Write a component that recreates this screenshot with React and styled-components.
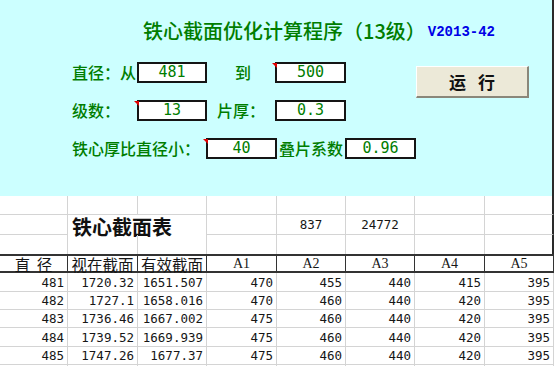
import styled, { createGlobalStyle, css } from "styled-components";

const GlobalStyle = createGlobalStyle`
  html, body { margin: 0; padding: 0; background: #ffffff; }
  body {
    width: 554px;
    height: 366px;
    overflow: hidden;
    font-family: "Noto Sans CJK SC", sans-serif;
  }
`;

const GREEN = "#007d00";

const rows = [
  ["481", "1720.32", "1651.507", "470", "455", "440", "415", "395"],
  ["482", "1727.1", "1658.016", "470", "460", "440", "420", "395"],
  ["483", "1736.46", "1667.002", "475", "460", "440", "420", "395"],
  ["484", "1739.52", "1669.939", "475", "460", "440", "420", "395"],
  ["485", "1747.26", "1677.37", "475", "460", "440", "420", "395"],
];

export default function App() {
  return (
    <Page>
      <GlobalStyle />
      <Panel>
        <TitleRow>
          <Title>铁心截面优化计算程序（13级）</Title>
          <Version>V2013-42</Version>
        </TitleRow>
        <PanelBody>
          <Form>
            <FormRow>
              <Label $w={65}>直径：从</Label>
              <ValueBox $w={70}>481</ValueBox>
              <Label $w={68} $pl={28}>到</Label>
              <ValueBox $w={71} $marked>500</ValueBox>
            </FormRow>
            <FormRow>
              <Label $w={65}>级数：</Label>
              <ValueBox $w={70} $marked>13</ValueBox>
              <Label $w={68} $pl={10}>片厚：</Label>
              <ValueBox $w={71}>0.3</ValueBox>
            </FormRow>
            <FormRow>
              <Label $w={134}>铁心厚比直径小：</Label>
              <ValueBox $w={71} $marked>40</ValueBox>
              <Label $w={68} $pl={2}>叠片系数</Label>
              <ValueBox $w={71}>0.96</ValueBox>
            </FormRow>
          </Form>
          <RunButton type="button">运 行</RunButton>
        </PanelBody>
      </Panel>

      <Sheet>
        {Array.from({ length: 8 }).map((_, i) => (
          <Cell key={"a" + i} $dark={i === 7} />
        ))}

        <Cell />
        <SheetTitle>铁心截面表</SheetTitle>
        <Cell />
        <Cell $align="center">837</Cell>
        <Cell $align="center">24772</Cell>
        <Cell />
        <Cell $dark />

        {Array.from({ length: 8 }).map((_, i) => (
          <Cell key={"c" + i} $dark={i === 7} $bare />
        ))}

        <HeadCell $spread>直 径</HeadCell>
        <HeadCell>视在截面</HeadCell>
        <HeadCell>有效截面</HeadCell>
        {["A1", "A2", "A3", "A4", "A5"].map((h) => (
          <HeadCell key={h} $latin>{h}</HeadCell>
        ))}

        {rows.map((r, ri) =>
          r.map((v, ci) => (
            <Cell key={ri + "-" + ci} $align="right">
              {v}
            </Cell>
          ))
        )}

        {Array.from({ length: 8 }).map((_, i) => (
          <Cell key={"e" + i} />
        ))}
      </Sheet>
    </Page>
  );
}

const Page = styled.div`
  width: 554px;
  height: 366px;
  overflow: hidden;
`;

const Panel = styled.div`
  height: 196px;
  box-sizing: border-box;
  background: #ccffff;
  border-right: 2px solid #2a2a2a;
  padding-top: 19px;
  display: flex;
  flex-direction: column;
`;

const TitleRow = styled.div`
  display: flex;
  align-items: center;
  gap: 2px;
  height: 24px;
  padding-left: 143px;
`;

const Title = styled.span`
  font-size: 20px;
  font-weight: 500;
  color: ${GREEN};
  white-space: nowrap;
  line-height: 24px;
`;

const Version = styled.span`
  font-family: "Liberation Mono", monospace;
  font-weight: 700;
  font-size: 14px;
  color: #0000e6;
  padding-top: 1px;
`;

const PanelBody = styled.div`
  display: flex;
  margin-top: 19px;
`;

const Form = styled.div`
  display: flex;
  flex-direction: column;
  gap: 17px;
  width: 416px;
  box-sizing: border-box;
  padding-left: 72px;
`;

const FormRow = styled.div`
  display: flex;
  align-items: center;
  height: 21px;
`;

const Label = styled.span`
  width: ${(p) => p.$w}px;
  padding-left: ${(p) => p.$pl || 0}px;
  box-sizing: border-box;
  font-size: 16px;
  font-weight: 500;
  color: ${GREEN};
  line-height: 21px;
  white-space: nowrap;
`;

const ValueBox = styled.div`
  position: relative;
  width: ${(p) => p.$w}px;
  height: 21px;
  box-sizing: border-box;
  border: 2px solid #151515;
  background: #ffffff;
  font-family: "DejaVu Sans Mono", monospace;
  font-size: 15px;
  line-height: 17px;
  color: ${GREEN};
  text-align: center;
  ${(p) =>
    p.$marked &&
    css`
      &::before {
        content: "";
        position: absolute;
        left: -5px;
        top: -1px;
        border-top: 5px solid #e00000;
        border-left: 5px solid transparent;
      }
    `}
`;

const RunButton = styled.button`
  margin-top: 4px;
  width: 113px;
  height: 32px;
  box-sizing: border-box;
  background: #ece9d8;
  border: none;
  border-top: 1px solid #ffffff;
  border-left: 1px solid #ffffff;
  border-right: 2px solid #8a877a;
  border-bottom: 2px solid #8a877a;
  padding: 0;
  font-family: "Noto Sans CJK SC", sans-serif;
  font-size: 17px;
  font-weight: 700;
  color: #111111;
  word-spacing: 8px;
  cursor: pointer;
`;

const Sheet = styled.div`
  display: grid;
  grid-template-columns: 68px 70px 69px 70px 69px 69px 70px 69px;
  grid-template-rows: 19px 20px 19px 19px 19px 18px 18px 19px 18px 20px;
  background: #ffffff;
`;

const Cell = styled.div`
  box-sizing: border-box;
  border-right: ${(p) => (p.$dark ? "2px solid #2a2a2a" : "1px solid #d4d4d4")};
  border-bottom: ${(p) => (p.$bare ? "none" : "1px solid #d4d4d4")};
  display: flex;
  align-items: center;
  justify-content: ${(p) =>
    p.$align === "right" ? "flex-end" : p.$align === "center" ? "center" : "flex-start"};
  padding-right: ${(p) => (p.$align === "right" ? "3px" : "0")};
  font-family: "DejaVu Sans Mono", monospace;
  font-size: 12.5px;
  color: #161616;
  white-space: nowrap;
  overflow: hidden;
`;

const SheetTitle = styled.div`
  grid-column: span 2;
  box-sizing: border-box;
  border-right: 1px solid #d4d4d4;
  padding: 1px 0 0 4px;
  font-size: 20px;
  font-weight: 700;
  color: #111111;
  line-height: 22px;
  white-space: nowrap;
`;

const HeadCell = styled.div`
  box-sizing: border-box;
  border-top: 2px solid #333333;
  border-bottom: 2px solid #333333;
  border-right: 1px solid #333333;
  display: flex;
  align-items: center;
  justify-content: center;
  color: #161616;
  white-space: nowrap;
  word-spacing: ${(p) => (p.$spread ? "3px" : "0")};
  ${(p) =>
    p.$latin
      ? css`
          font-family: "Liberation Serif", serif;
          font-size: 14px;
        `
      : css`
          font-family: "Noto Sans CJK SC", sans-serif;
          font-size: 15.5px;
        `}
`;
